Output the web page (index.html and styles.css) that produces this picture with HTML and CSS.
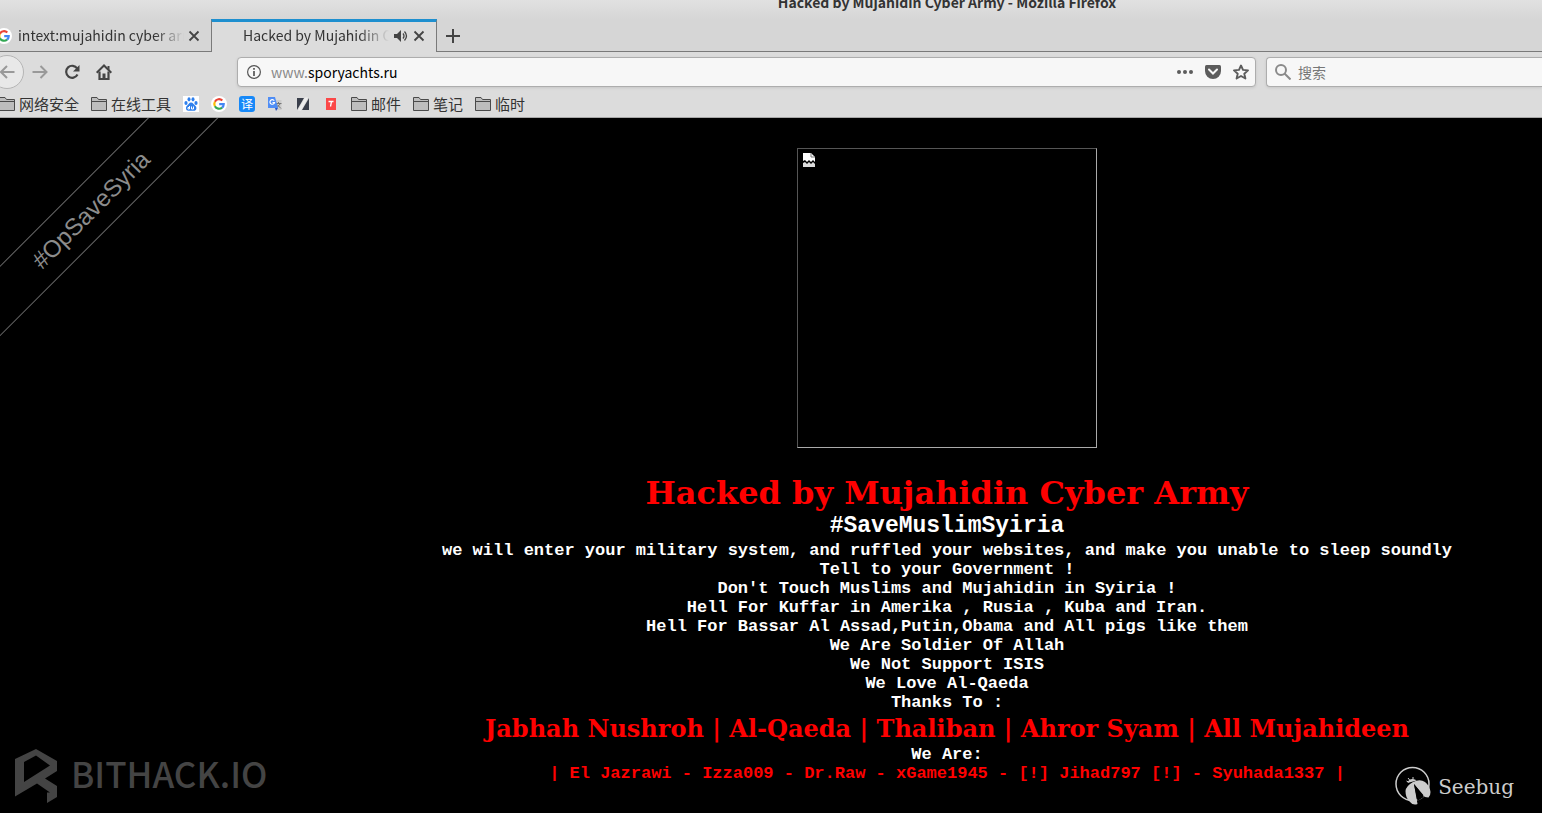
FILE: index.html
```
<!DOCTYPE html>
<html lang="zh-CN">
<head>
  <meta charset="UTF-8">
  <meta name="viewport" content="width=device-width, initial-scale=1.0">
  <title>Hacked by Mujahidin Cyber Army</title>
  <link rel="stylesheet" href="styles.css">
</head>
<body>
  <svg class="defs" width="0" height="0">
    <symbol id="folder" viewBox="0 0 16 16">
      <path d="M.5 14.500v-13h5.500l1.500 2h8v11z" fill="#bdbdbd" stroke="#4a4a4a"/>
      <path d="M1 5.500h14" stroke="#4a4a4a"/>
    </symbol>
    <symbol id="google" viewBox="0 0 16 16">
      <circle cx="8" cy="8" r="8" fill="#fff"/>
      <g fill="none" stroke-width="2.200">
        <path d="M11.300 4.500A4.700 4.700 0 0 0 3.900 5.700" stroke="#ea4335"/>
        <path d="M3.900 5.700a4.700 4.700 0 0 0 0 4.600" stroke="#fbbc05"/>
        <path d="M3.900 10.300a4.700 4.700 0 0 0 7.200 1.300" stroke="#34a853"/>
        <path d="M11.100 11.600A4.700 4.700 0 0 0 12.700 8.200H8.200" stroke="#4285f4"/>
      </g>
    </symbol>
    <symbol id="close" viewBox="0 0 12 12">
      <path d="M1.500 1.500l9 9M10.500 1.500l-9 9" stroke="#444" stroke-width="1.800"/>
    </symbol>
  </svg>

  <!-- Browser window -->
  <header class="browser">
    <div class="titlebar">Hacked by Mujahidin Cyber Army - Mozilla Firefox</div>

    <div class="tabs">
      <div class="tab">
        <svg class="icon" aria-hidden="true"><use href="#google"/></svg>
        <span class="tab-label">intext:mujahidin cyber army</span>
        <button class="tab-btn" aria-label="Close tab"><svg width="12" height="12"><use href="#close"/></svg></button>
      </div>
      <div class="tab active">
        <span class="tab-label">Hacked by Mujahidin Cyber Army</span>
        <button class="tab-btn" aria-label="Mute tab">
          <svg width="16" height="16" viewBox="0 0 16 16"><path d="M1 6h3l4-4v12l-4-4H1z" fill="#444"/><path d="M10 5.500q2 2.500 0 5M11.500 3.500q4 4.500 0 9" fill="none" stroke="#444" stroke-width="1.300"/></svg>
        </button>
        <button class="tab-btn" aria-label="Close tab"><svg width="12" height="12"><use href="#close"/></svg></button>
      </div>
      <button class="new-tab" aria-label="New tab">
        <svg width="14" height="14" viewBox="0 0 14 14"><path d="M7 0v14M0 7h14" stroke="#444" stroke-width="2"/></svg>
      </button>
    </div>

    <div class="navbar">
      <button class="back" aria-label="Back">
        <svg width="16" height="16" viewBox="0 0 16 16"><path d="M15.500 8H2M8 2L2 8l6 6" fill="none" stroke="#999" stroke-width="2"/></svg>
      </button>
      <button class="nav-btn" aria-label="Forward">
        <svg width="16" height="16" viewBox="0 0 16 16"><path d="M.5 8H14M8.500 2l6 6-6 6" fill="none" stroke="#999" stroke-width="2"/></svg>
      </button>
      <button class="nav-btn" aria-label="Reload">
        <svg width="16" height="16" viewBox="0 0 16 16"><path d="M13.200 4.500A6 6 0 1 0 13.500 10.500" fill="none" stroke="#444" stroke-width="2.200"/><path d="M15.500 1v6.500H9z" fill="#444"/></svg>
      </button>
      <button class="nav-btn" aria-label="Home">
        <svg width="16" height="16" viewBox="0 0 16 16"><path d="M.7 8.700L8 1.500l7.300 7.200" fill="none" stroke="#444" stroke-width="2"/><path d="M3.500 7.500v7.500h9V7.500" fill="none" stroke="#444" stroke-width="2.200"/><path d="M6.500 15V9.500h3V15zM11.500 2h2v4l-2-2z" fill="#444"/></svg>
      </button>
      <div class="field urlbar">
        <svg width="14" height="14" viewBox="0 0 14 14"><circle cx="7" cy="7" r="6.400" fill="none" stroke="#555" stroke-width="1.200"/><path d="M7 6v5M7 3v1.700" stroke="#555" stroke-width="1.700"/></svg>
        <a class="url" href="#"><span>www.</span>sporyachts.ru</a>
        <button class="field-btn" aria-label="Page actions">
          <svg width="16" height="16" viewBox="0 0 16 16" fill="#5c5c5c"><circle cx="2" cy="8" r="2"/><circle cx="8" cy="8" r="2"/><circle cx="14" cy="8" r="2"/></svg>
        </button>
        <button class="field-btn" aria-label="Save to Pocket">
          <svg width="16" height="16" viewBox="0 0 16 16"><path d="M1.500 1h13Q16 1 16 2.500V7A8 8 0 0 1 0 7V2.500Q0 1 1.500 1z" fill="#5c5c5c"/><path d="M4 5.500l4 4 4-4" fill="none" stroke="#f7f7f7" stroke-width="2" stroke-linecap="round"/></svg>
        </button>
        <button class="field-btn" aria-label="Bookmark this page">
          <svg width="16" height="16" viewBox="0 0 16 16"><path d="M8 1.500l2 4.400 5 .5-3.700 3.300 1.100 4.800L8 12l-4.400 2.500 1.100-4.800L1 6.400l5-.5z" fill="none" stroke="#5c5c5c" stroke-width="1.900" stroke-linejoin="round"/></svg>
        </button>
      </div>
      <div class="field search">
        <svg width="16" height="16" viewBox="0 0 16 16"><circle cx="6" cy="6" r="5" fill="none" stroke="#8a8a8a" stroke-width="2"/><path d="M9.500 9.500l6 6" stroke="#8a8a8a" stroke-width="2"/></svg>
        <input type="text" aria-label="搜索" placeholder="搜索">
      </div>
    </div>

    <nav class="bookmarks">
      <a href="#"><svg class="icon"><use href="#folder"/></svg>网络安全</a>
      <a href="#"><svg class="icon"><use href="#folder"/></svg>在线工具</a>
      <a href="#" aria-label="Baidu">
        <svg class="icon" viewBox="0 0 16 16"><path d="M0 0h16v16H0z" fill="#fff"/><g fill="#2f80ed"><ellipse cx="3" cy="7" rx="1.600" ry="2.100"/><ellipse cx="6" cy="3.300" rx="1.500" ry="2.100"/><ellipse cx="10" cy="3.300" rx="1.500" ry="2.100"/><ellipse cx="13" cy="7" rx="1.600" ry="2.100"/><path d="M8 6.500c-2 0-2.500 2-4 3.300-1.500 1.200-1.500 5 1.500 5 1.500 0 3.500-.3 5 0 3 .3 3.700-3.300 2-4.800S10 6.500 8 6.500z"/></g><path d="M6.500 10v3H5v-1.500h1.500M8.500 10.500V13h2v-2.500" fill="none" stroke="#fff"/></svg>
      </a>
      <a href="#" aria-label="Google"><svg class="icon"><use href="#google"/></svg></a>
      <a href="#" class="fanyi">译</a>
      <a href="#" aria-label="Google Translate">
        <svg class="icon" viewBox="0 0 16 16"><path d="M6 4h8.500v10H9z" fill="#ccc"/><path d="M8.500 7.500h6M11.500 6v1.500M9.500 12l4-4.500M10 8.500l4 4" stroke="#777"/><path d="M1 1h7l3 11H1z" fill="#4f8df5"/><path d="M8 12h3l-2 3z" fill="#2855c7"/><path d="M7.200 4.700A2.300 2.300 0 1 0 7.500 6.500H5.500" fill="none" stroke="#fff" stroke-width="1.200"/></svg>
      </a>
      <a href="#" aria-label="Tools">
        <svg class="icon" viewBox="0 0 16 16"><path d="M2 2h7L2 14zM14 2v12H7z" fill="#3a3f4b"/><path d="M10 1.500h3L6 14.500H3z" fill="#eee"/></svg>
      </a>
      <a href="#" aria-label="T">
        <svg class="icon" viewBox="0 0 16 16"><path d="M3 2h10v12H3z" fill="#fb4848"/><path d="M5.500 5.500h5M8.500 5.500l-1 5" stroke="#fff" stroke-width="1.300"/></svg>
      </a>
      <a href="#"><svg class="icon"><use href="#folder"/></svg>邮件</a>
      <a href="#"><svg class="icon"><use href="#folder"/></svg>笔记</a>
      <a href="#"><svg class="icon"><use href="#folder"/></svg>临时</a>
    </nav>
  </header>

  <!-- Page content -->
  <main class="page">
    <div class="ribbon">#OpSaveSyria</div>

    <div class="missing-image">
      <svg width="12" height="14" viewBox="0 0 12 14"><path d="M0 0h8l4 4v5l-2-2-2 2-2-2-2 2-2-2-2 1z" fill="#fff"/><path d="M8 0v4h4" fill="none" stroke="#777"/><path d="M0 10l2-1 2 2 2-2 2 2 2-2 2 2v3H0z" fill="#ddd"/></svg>
    </div>

    <h1>Hacked by Mujahidin Cyber Army</h1>
    <h2>#SaveMuslimSyiria</h2>
    <p>we will enter your military system, and ruffled your websites, and make you unable to sleep soundly</p>
    <p>Tell to your Government !</p>
    <p>Don't Touch Muslims and Mujahidin in Syiria !</p>
    <p>Hell For Kuffar in Amerika , Rusia , Kuba and Iran.</p>
    <p>Hell For Bassar Al Assad,Putin,Obama and All pigs like them</p>
    <p>We Are Soldier Of Allah</p>
    <p>We Not Support ISIS</p>
    <p>We Love Al-Qaeda</p>
    <p>Thanks To :</p>
    <h3>Jabhah Nushroh | Al-Qaeda | Thaliban | Ahror Syam | All Mujahideen</h3>
    <p>We Are:</p>
    <p class="red">| El Jazrawi - Izza009 - Dr.Raw - xGame1945 - [!] Jihad797 [!] - Syuhada1337 |</p>
  </main>

  <!-- Watermarks -->
  <div class="mark bithack">
    <svg width="42" height="54" viewBox="0 0 42 54"><path fill="#444" fill-rule="evenodd" d="M0 10L21 0l21 12v10L30 29.500 42 37v11l-10 6V43.500h3L22 34.500 0 47.500zM9 13v20l26-16.500L21 6.500z"/></svg>
    <span>BITHACK.IO</span>
  </div>
  <div class="mark seebug">
    <svg width="38" height="42" viewBox="0 0 38 42">
      <circle cx="17.500" cy="18" r="16.500" fill="none" stroke="#ccc" stroke-width="1.500"/>
      <path d="M10.500 25Q11 20 18 16Q25 12.500 30 16Q35 20 35.500 26Q35.500 30 33.500 31.500L30 31L19 18L22.500 38Q18 40 14 35Q10.500 31 10.500 25z" fill="#ccc"/>
      <path d="M19 18L22.500 35L29 31z" fill="#000"/>
      <path d="M12.500 17q1-4 5-4 3 0 4 1.500z" fill="#ccc"/>
      <path d="M13 12l2 2.500M18 11v2.500M11.500 15l2 1" stroke="#ccc"/>
    </svg>
    <span>Seebug</span>
  </div>
</body>
</html>
```
FILE: styles.css
```
* {
  box-sizing: border-box;
}

body {
  margin: 0;
  min-height: 100vh;
  position: relative;
  overflow: hidden;
  background: #000;
  color: #fff;
}

button {
  display: flex;
  align-items: center;
  justify-content: center;
  padding: 0;
  border: none;
  background: none;
}

a {
  color: inherit;
  text-decoration: none;
}

svg {
  display: block;
  flex-shrink: 0;
}

.defs {
  position: absolute;
}

.icon {
  width: 16px;
  height: 16px;
}

/* Browser window */
.browser {
  overflow: hidden;
  background: #dcdcdc;
  border-bottom: 1px solid #a8a8a8;
  color: #333;
  font-family: "Noto Sans CJK SC", sans-serif;
  font-size: 15px;
}

.titlebar {
  height: 19px;
  padding-left: 352px;
  background: linear-gradient(#e1e1e1, #d6d6d6);
  font-size: 14px;
  font-weight: bold;
  line-height: 4px;
  text-align: center;
}

/* Tabs */
.tabs {
  display: flex;
  height: 33px;
  background: linear-gradient(to top, #7a7a7a 1px, #d6d6d6 1px);
}

.tab {
  display: flex;
  align-items: center;
  width: 211px;
  padding: 0 11px 0 0;
}

.tab .icon {
  margin: 0 6px 0 -4px;
}

.tab.active {
  width: 226px;
  padding: 0 11px 2px 31px;
  background: #dcdcdc;
  border: 1px solid #7a7a7a;
  border-top: 3px solid #1e8fcf;
  border-bottom: none;
}

.tab-label {
  flex: 1;
  overflow: hidden;
  padding-bottom: 2px;
  white-space: nowrap;
  font-size: 14px;
  -webkit-mask-image: linear-gradient(to left, transparent, #000 30px);
  mask-image: linear-gradient(to left, transparent, #000 30px);
}

.tab-btn {
  margin-left: 4px;
}

.new-tab {
  width: 32px;
}

/* Navigation */
.navbar {
  display: flex;
  align-items: center;
  height: 40px;
}

.back {
  width: 34px;
  height: 34px;
  margin-left: -10px;
  border: 1px solid #b5b5b5;
  border-radius: 50%;
  background: #e8e8e8;
}

.nav-btn {
  width: 32px;
  height: 32px;
}

.field {
  display: flex;
  align-items: center;
  height: 30px;
  border: 1px solid #adadad;
  border-radius: 4px;
  background: #f7f7f7;
  box-shadow: 0 1px 3px rgba(0, 0, 0, 0.1);
}

.urlbar {
  flex: 1;
  gap: 12px;
  margin-left: 117px;
  padding: 0 6px 0 9px;
}

.url {
  flex: 1;
  margin-left: -2px;
  color: #000;
  font-size: 14px;
}

.url span {
  color: #888;
}

.search {
  width: 276px;
  gap: 7px;
  margin-left: 10px;
  padding-left: 8px;
  border-right: none;
  border-radius: 4px 0 0 4px;
}

.search input {
  flex: 1;
  min-width: 0;
  padding: 0;
  border: none;
  outline: none;
  background: none;
  font-family: inherit;
  font-size: 14px;
}

.search input::placeholder {
  color: #777;
}

/* Bookmarks */
.bookmarks {
  display: flex;
  align-items: center;
  gap: 12px;
  height: 25px;
  margin-left: -1px;
  padding-bottom: 2px;
}

.bookmarks a {
  display: flex;
  align-items: center;
  gap: 4px;
  line-height: 22px;
}

.bookmarks .fanyi {
  justify-content: center;
  width: 16px;
  height: 16px;
  border-radius: 3px;
  background: #1688f8;
  color: #fff;
  font-size: 12px;
  line-height: 16px;
}

/* Page content */
.page {
  position: relative;
  padding: 30px 0 0 352px;
  overflow: hidden;
  font-family: "Liberation Mono", monospace;
  font-size: 17px;
  font-weight: bold;
  line-height: 19px;
  text-align: center;
}

.page p {
  margin: 0;
}

.page .red {
  color: #f00;
}

.ribbon {
  position: absolute;
  top: 67px;
  left: -79px;
  width: 340px;
  height: 50px;
  border: 1px solid #666;
  color: #8c8c8c;
  font-family: "Liberation Sans", sans-serif;
  font-size: 24px;
  font-weight: normal;
  line-height: 48px;
  transform: rotate(-45deg);
}

.missing-image {
  width: 300px;
  height: 300px;
  margin: 0 auto 26px;
  padding: 4px 5px;
  border: 1px solid;
  border-color: #555 #aaa #aaa #555;
}

h1,
h2,
h3 {
  margin: 0;
}

h1,
h3 {
  color: #f00;
  font-family: "DejaVu Serif", serif;
}

h1 {
  font-size: 32px;
  line-height: 38px;
}

h2 {
  font-size: 23px;
  line-height: 29px;
}

h3 {
  padding-top: 1px;
  font-size: 24px;
  line-height: 32px;
}

/* Watermarks */
.mark {
  position: absolute;
  display: flex;
  align-items: center;
}

.bithack {
  left: 15px;
  bottom: 10px;
  gap: 14px;
  color: #444;
  font-family: "Noto Sans CJK SC", sans-serif;
  font-size: 35px;
  font-weight: 500;
  line-height: 48px;
}

.bithack span {
  padding-bottom: 6px;
}

.seebug {
  right: 28px;
  bottom: 5px;
  gap: 5px;
  color: #ccc;
  font-family: "DejaVu Serif", serif;
  font-size: 20px;
  line-height: 42px;
}
```
